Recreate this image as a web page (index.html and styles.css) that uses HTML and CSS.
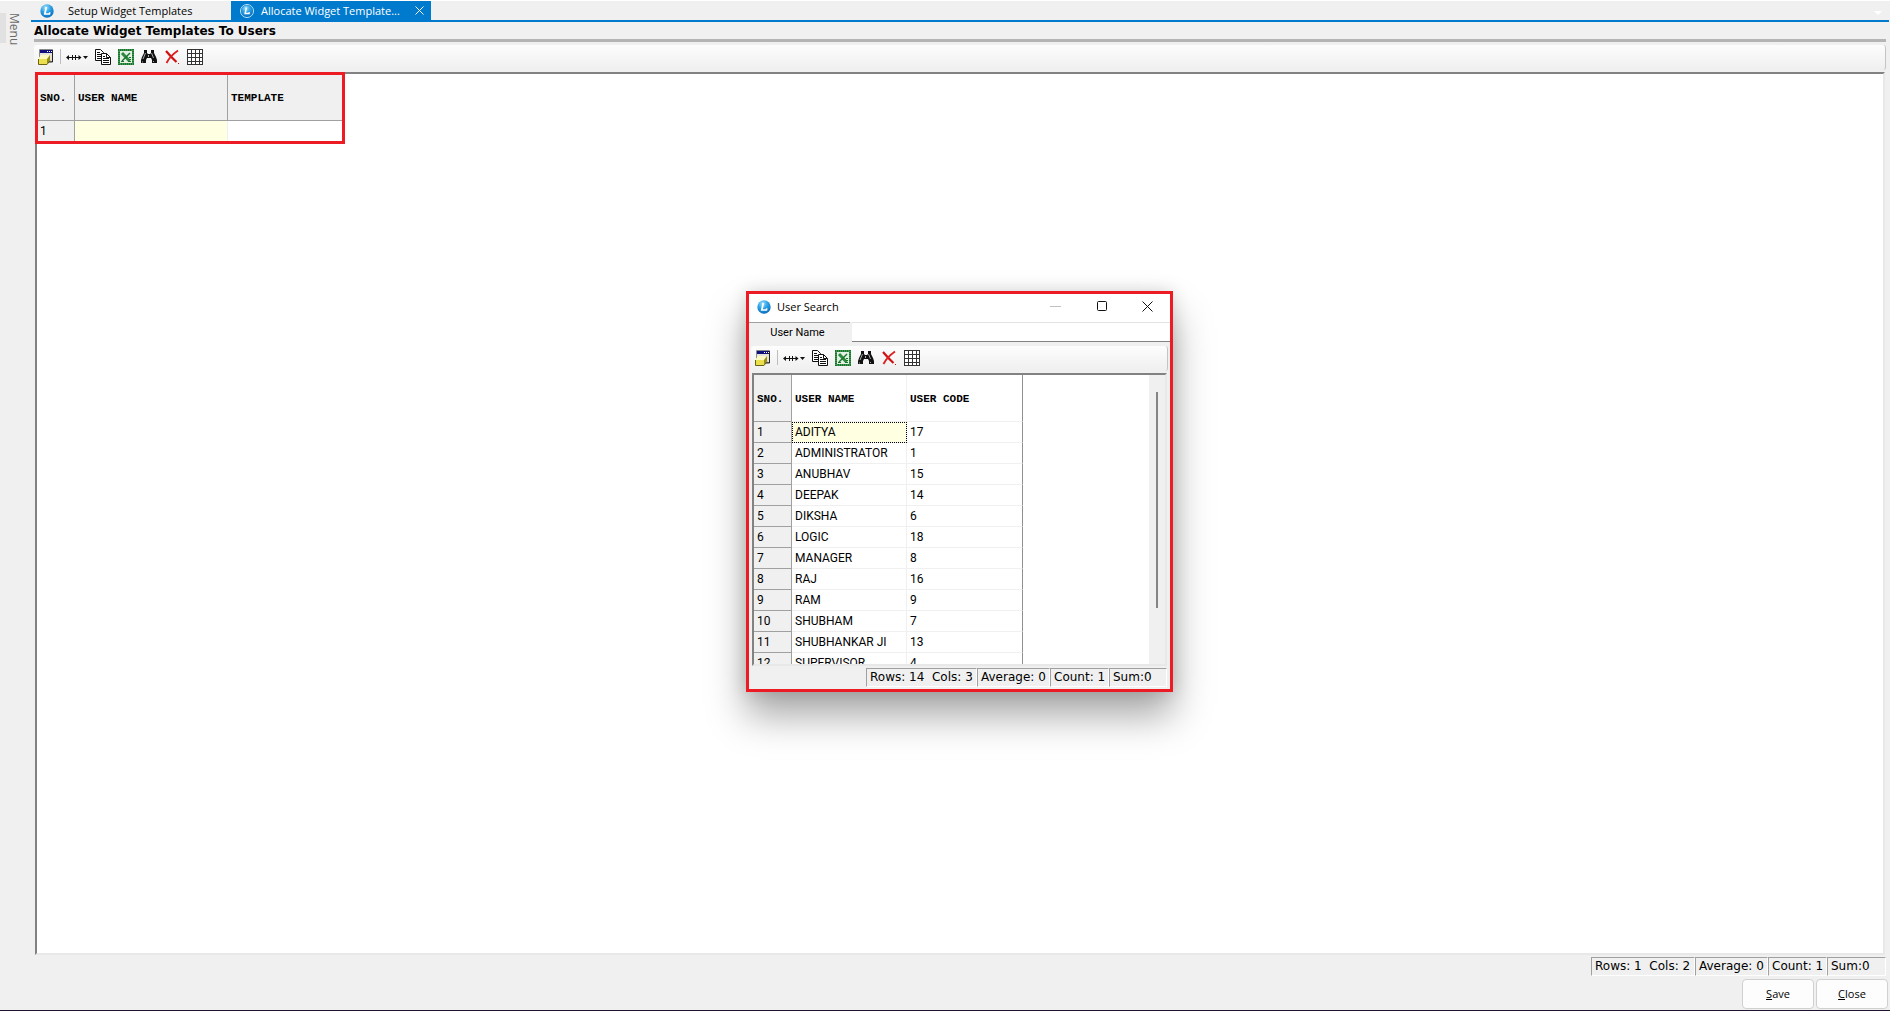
FILE: index.html
```html
<!DOCTYPE html>
<html lang="en">
<head>
<meta charset="utf-8">
<title>Allocate Widget Templates To Users</title>
<link rel="stylesheet" href="styles.css">
</head>
<body>
<svg class="defs" aria-hidden="true">
  <defs>
    <radialGradient id="ball" cx="40%" cy="25%" r="80%">
      <stop offset="0" stop-color="#a5e0fb"/><stop offset=".45" stop-color="#2ea3e6"/><stop offset="1" stop-color="#0869b8"/>
    </radialGradient>
  </defs>
  <symbol id="logo" viewBox="0 0 14 14">
    <circle cx="7" cy="7" r="6.7" fill="url(#ball)"/>
    <path d="M6.3 3 4.8 10h4.6l.4-1.6" fill="none" stroke="#fff" stroke-width="1.7"/>
  </symbol>
  <symbol id="form" viewBox="0 0 16 16">
    <path d="M1.500.500h13v12h-13z" fill="#e6e3da" stroke="#8a8a8a"/>
    <path d="M2 1h12v3H2z" fill="#10107c"/>
    <path d="M9 2h1v1H9zM11 2h1v1h-1zM13 2h1v1h-1z" fill="#fff"/>
    <path d="M14.500 1v12h-4" fill="none" stroke="#222"/>
    <path d="M0 10l3-4h9l-3 4z" fill="#fdfac0"/>
    <path d="M0 10h9v5H0z" fill="#eadf4c"/>
    <path d="M9 10l3-4v5l-3 4z" fill="#9a8d18"/>
    <path d="M.500 10v5.500h8.500l3-4" fill="none" stroke="#6b6314"/>
  </symbol>
  <symbol id="width" viewBox="0 0 22 16">
    <path d="M1 8.500h14M6.500 6v5M9.500 6v5" stroke="#111" fill="none"/>
    <path d="M0 8.500l3-2.500v5zM15.500 8.500l-3-2.500v5z" fill="#111"/>
    <path d="M17 7h5l-2.500 3z" fill="#111"/>
  </symbol>
  <symbol id="copy" viewBox="0 0 16 16">
    <path d="M.500.500h5l3 3v8h-8z" fill="#fff" stroke="#111"/>
    <path d="M2 3.500h3M2 5.500h4M2 7.500h4M2 9.500h4" stroke="#111"/>
    <path d="M6.500 4.500h5l4 4v7h-9z" fill="#fff" stroke="#111"/>
    <path d="M11.500 4.500v4h4M8 7.500h2M8 9.500h6M8 11.500h6M8 13.500h6" stroke="#111" fill="none"/>
  </symbol>
  <symbol id="excel" viewBox="0 0 16 16">
    <path d="M1 1h14v14H1z" fill="#e4f0e4" stroke="#18742a" stroke-width="2"/>
    <path d="M1 1h14v14H1z" fill="none" stroke="#6fb77a" stroke-width="1" stroke-dasharray="1 1"/>
    <path d="M4 4l7.500 8" stroke="#2f8a40" stroke-width="3"/>
    <path d="M12 4l-8 8" stroke="#18742a" stroke-width="1.500"/>
    <path d="M3 12.500h3M10 12.500h3M11 8.500h2M11 10.500h2" stroke="#18742a"/>
  </symbol>
  <symbol id="find" viewBox="0 0 16 16">
    <path d="M3 1h3v3l1 1h2l1-1V1h3v3l2 4 1 3v3h-5v-3l-1-2H6l-1 2v3H0v-3l1-3 2-4z" fill="#111"/>
    <path d="M4.500 4 2 10M10.500 4l2 5M7.500 6v2M1.500 12.500v1M12.500 12v1" stroke="#a8a8a8" fill="none"/>
  </symbol>
  <symbol id="remove" viewBox="0 0 16 16">
    <path d="M2 2c3 3.500 6 7 10.500 11" stroke="#cf1010" stroke-width="2.200" fill="none"/>
    <path d="M14 1.500C9 5 5 9 2.500 14" stroke="#dc2020" stroke-width="1.800" fill="none"/>
    <path d="M14 14h1v1h-1z" fill="#cf1010"/>
  </symbol>
  <symbol id="cells" viewBox="0 0 16 16">
    <path d="M.500.500h15v15H.500z" fill="#fff"/>
    <path d="M.500 0v16M4.500 0v16M8.500 0v16M12.500 0v16M15.500 0v16M0 .500h16M0 4.500h16M0 8.500h16M0 12.500h16M0 15.500h16" stroke="#333" fill="none"/>
  </symbol>
</svg>

<div class="app">
  <aside class="rail"><button class="menu" type="button">Menu</button></aside>
  <main class="workspace">
    <nav class="tabs">
      <button class="tab" type="button"><svg class="logo"><use href="#logo"/></svg><span>Setup Widget Templates</span></button>
      <button class="tab active" type="button"><svg class="logo ringed"><use href="#logo"/></svg><span>Allocate Widget Template...</span>
        <svg class="tab-close" viewBox="0 0 9 9"><path d="M.500.500l8 8M8.500.500l-8 8"/></svg></button>
      <svg class="tab-list" viewBox="0 0 8 4"><path d="M0 0h8L4 4z"/></svg>
    </nav>
    <h1 class="title">Allocate Widget Templates To Users</h1>
    <div class="toolbar">
      <button type="button" aria-label="Layout"><svg><use href="#form"/></svg></button>
      <i class="sep"></i>
      <button class="wide" type="button" aria-label="Column width"><svg><use href="#width"/></svg></button>
      <button type="button" aria-label="Copy"><svg><use href="#copy"/></svg></button>
      <button type="button" aria-label="Export"><svg><use href="#excel"/></svg></button>
      <button type="button" aria-label="Find"><svg><use href="#find"/></svg></button>
      <button type="button" aria-label="Delete"><svg><use href="#remove"/></svg></button>
      <button type="button" aria-label="Grid"><svg><use href="#cells"/></svg></button>
    </div>
    <section class="grid">
      <div class="marked">
        <table class="allocations">
          <colgroup><col class="c-no"><col class="c-user"><col></colgroup>
          <thead><tr><th>SNO.</th><th>USER NAME</th><th>TEMPLATE</th></tr></thead>
          <tbody><tr><td>1</td><td class="current"></td><td></td></tr></tbody>
        </table>
      </div>
    </section>
    <div class="status">
      <span class="rows">Rows: 1&nbsp; Cols: 2</span><span class="average">Average: 0</span><span class="count">Count: 1</span><span class="sum">Sum:0</span>
    </div>
    <footer class="actions">
      <button type="button"><u>S</u>ave</button>
      <button type="button"><u>C</u>lose</button>
    </footer>
  </main>
</div>

<div class="dialog" role="dialog" aria-labelledby="dialog-title">
  <header class="caption">
    <svg class="logo"><use href="#logo"/></svg>
    <h2 id="dialog-title">User Search</h2>
    <button type="button" aria-label="Minimize"><svg viewBox="0 0 11 11"><path class="dim" d="M0 5.500h11"/></svg></button>
    <button type="button" aria-label="Maximize"><svg viewBox="0 0 11 11"><rect x="1.500" y=".5" width="9" height="9" rx="1"/></svg></button>
    <button type="button" aria-label="Close"><svg viewBox="0 0 11 11"><path d="M.500.500l10 10M10.500.500l-10 10"/></svg></button>
  </header>
  <div class="search">
    <label for="user-name">User Name</label>
    <input id="user-name" type="text">
  </div>
  <div class="toolbar">
    <button type="button" aria-label="Layout"><svg><use href="#form"/></svg></button>
    <i class="sep"></i>
    <button class="wide" type="button" aria-label="Column width"><svg><use href="#width"/></svg></button>
    <button type="button" aria-label="Copy"><svg><use href="#copy"/></svg></button>
    <button type="button" aria-label="Export"><svg><use href="#excel"/></svg></button>
    <button type="button" aria-label="Find"><svg><use href="#find"/></svg></button>
    <button type="button" aria-label="Delete"><svg><use href="#remove"/></svg></button>
    <button type="button" aria-label="Grid"><svg><use href="#cells"/></svg></button>
  </div>
  <section class="grid">
    <table class="users">
      <colgroup><col class="c-no"><col class="c-name"><col></colgroup>
      <thead><tr><th>SNO.</th><th>USER NAME</th><th>USER CODE</th></tr></thead>
      <tbody>
        <tr><td>1</td><td class="current focus">ADITYA</td><td>17</td></tr>
        <tr><td>2</td><td>ADMINISTRATOR</td><td>1</td></tr>
        <tr><td>3</td><td>ANUBHAV</td><td>15</td></tr>
        <tr><td>4</td><td>DEEPAK</td><td>14</td></tr>
        <tr><td>5</td><td>DIKSHA</td><td>6</td></tr>
        <tr><td>6</td><td>LOGIC</td><td>18</td></tr>
        <tr><td>7</td><td>MANAGER</td><td>8</td></tr>
        <tr><td>8</td><td>RAJ</td><td>16</td></tr>
        <tr><td>9</td><td>RAM</td><td>9</td></tr>
        <tr><td>10</td><td>SHUBHAM</td><td>7</td></tr>
        <tr><td>11</td><td>SHUBHANKAR JI</td><td>13</td></tr>
        <tr><td>12</td><td>SUPERVISOR</td><td>4</td></tr>
      </tbody>
    </table>
    <div class="track"><div class="thumb"></div></div>
  </section>
  <div class="status">
    <span class="rows">Rows: 14&nbsp; Cols: 3</span><span class="average">Average: 0</span><span class="count">Count: 1</span><span class="sum">Sum:0</span>
  </div>
</div>
</body>
</html>
```
FILE: styles.css
```css
* { box-sizing: border-box; }

body {
  margin: 0;
  background: #f0f0f0;
  color: #000;
  font: 12px/16px "Open Sans", "Noto Sans", sans-serif;
}

button {
  margin: 0;
  padding: 0;
  border: 0;
  background: none;
  color: inherit;
  font: inherit;
}

.defs { position: absolute; width: 0; height: 0; }

.app {
  display: flex;
  min-height: 100vh;
  border-top: 1px solid #fff;
  border-bottom: 1px solid #24122c;
}

.rail { flex: 0 0 31px; padding-top: 12px; }

.menu {
  display: block;
  height: 30px;
  border-left: 6px solid #e1e1e1;
  color: #6a6a6a;
  line-height: 16px;
  writing-mode: vertical-rl;
}

.workspace {
  flex: 1;
  min-width: 0;
  display: flex;
  flex-direction: column;
}

/* Document tabs */
.tabs {
  display: flex;
  align-items: center;
  height: 21px;
  margin-right: 1px;
  border-bottom: 2px solid #007acc;
}

.tab {
  display: flex;
  align-items: center;
  width: 200px;
  height: 19px;
  padding-left: 9px;
  font-size: 11px;
}

.tab span { margin-left: 7px; white-space: nowrap; }
.tab:first-child span { margin-left: 14px; }
.tab.active { background: #007acc; color: #fff; }
.tab-close { width: 9px; height: 9px; margin: 0 7px 0 auto; fill: none; stroke: #fff; }
.tab-list { width: 8px; height: 4px; margin: 5px 7px 0 auto; fill: #fff; }

.logo { flex: none; width: 14px; height: 14px; }
.ringed { border: 1px solid #bfe4fa; border-radius: 50%; }

.title {
  margin: 0 4px 0 3px;
  padding-top: 1px;
  border-bottom: 3px solid #b4b4b4;
  font: bold 12px/16px "DejaVu Sans", sans-serif;
}

/* Grid toolbar */
.toolbar {
  display: flex;
  align-items: center;
  gap: 7px;
  height: 25px;
  margin: 3px 4px 2px 3px;
  padding: 0 0 2px 4px;
  border-right: 1px solid #c4c4c4;
  border-radius: 3px;
  background: linear-gradient(#fdfdfd, #efefef);
}

.toolbar button, .toolbar svg { display: block; width: 16px; height: 16px; }
.toolbar .wide, .toolbar .wide svg { width: 22px; }
.sep { width: 1px; height: 15px; margin: 0 -2px 0 -1px; background: #bdbdbd; }

/* Data grids */
.grid {
  flex: 1;
  min-height: 0;
  display: flex;
  overflow: hidden;
  border: 2px solid;
  border-color: #828282 #e8e8e8 #e8e8e8 #828282;
  background: #fff;
}

.workspace .grid { margin: 0 5px 0 4px; overflow: visible; }

.marked { position: relative; align-self: flex-start; width: 308px; }

.marked::after {
  content: "";
  position: absolute;
  inset: -2px 0 -2px -2px;
  border: 3px solid #ed1c24;
}

table {
  table-layout: fixed;
  border-collapse: separate;
  border-spacing: 0;
}

th, td {
  height: 21px;
  padding: 0 0 0 3px;
  border-right: 1px solid #f0f0f0;
  border-bottom: 1px solid #f0f0f0;
  font: 12px/16px Roboto, sans-serif;
  text-align: left;
  white-space: nowrap;
}

th {
  height: 47px;
  padding-top: 2px;
  font: bold 11px/16px "Liberation Mono", monospace;
}

tr > :first-child {
  border-color: #a0a0a0;
  background: #f0f0f0;
}

.c-no { width: 38px; }
.c-user { width: 153px; }
.c-name { width: 115px; }
.allocations { width: 308px; }
.allocations th { border-color: #a0a0a0; background: #f0f0f0; }
.users { width: 269px; align-self: flex-start; }
.users tr > :last-child { border-right-color: #909090; }
.current { background: #ffffe1; }
.focus { outline: 1px dotted #000; outline-offset: -1px; }

.track { width: 16px; margin-left: auto; padding: 17px 7px 0; background: #f0f0f0; }
.thumb { width: 2px; height: 216px; background: #858585; }

/* Summary cells under a grid */
.status {
  display: flex;
  justify-content: flex-end;
  height: 19px;
  margin: 2px 4px 3px;
  font: 12px/17px "DejaVu Sans", sans-serif;
}

.status span {
  padding-left: 3px;
  border: 1px solid;
  border-color: #a0a0a0 #fff #fff #a0a0a0;
  white-space: nowrap;
}

.rows { width: 111px; }
.workspace .rows { width: 104px; }
.average { width: 73px; }
.count { width: 59px; }
.sum { width: 58px; }
.workspace .sum { width: 59px; }

.actions {
  display: flex;
  justify-content: flex-end;
  gap: 2px;
  padding: 0 2px 1px;
  font-size: 11px;
}

.actions button {
  width: 72px;
  height: 30px;
  border: 1px solid #d0d0d0;
  border-radius: 4px;
  background: #fdfdfd;
}

/* User search window */
.dialog {
  position: absolute;
  top: 291px;
  left: calc(50% - 199px);
  display: flex;
  flex-direction: column;
  width: 427px;
  height: 401px;
  border: 3px solid #ed1c24;
  background: #f0f0f0;
  box-shadow: 0 24px 36px rgba(0, 0, 0, .34), 0 0 16px rgba(0, 0, 0, .14);
}

.caption {
  display: flex;
  align-items: center;
  height: 28px;
  padding: 0 0 3px 8px;
  background: #fff;
}

.caption h2 { flex: 1; margin: 0 0 0 6px; font-size: 11px; font-weight: normal; }
.caption button { width: 46px; height: 24px; }
.caption button svg { display: block; width: 11px; height: 11px; margin: auto; fill: none; stroke: #111; }
.caption .dim { stroke: #c0c0c0; }

.search { display: flex; height: 20px; gap: 2px; font: 11px/19px Roboto, sans-serif; }
.search label { width: 101px; padding-right: 4px; border-top: 1px solid #a0a0a0; text-align: center; }

.search input {
  flex: 1;
  min-width: 0;
  border: 0;
  border-top: 1px solid #e4e4e4;
  border-bottom: 1px solid #828282;
  background: #fff;
  font: inherit;
}

.dialog .toolbar { margin: 4px 2px 2px; }
.dialog .grid { margin: 0 3px; }
.dialog .status { margin: 2px 3px; }
```
